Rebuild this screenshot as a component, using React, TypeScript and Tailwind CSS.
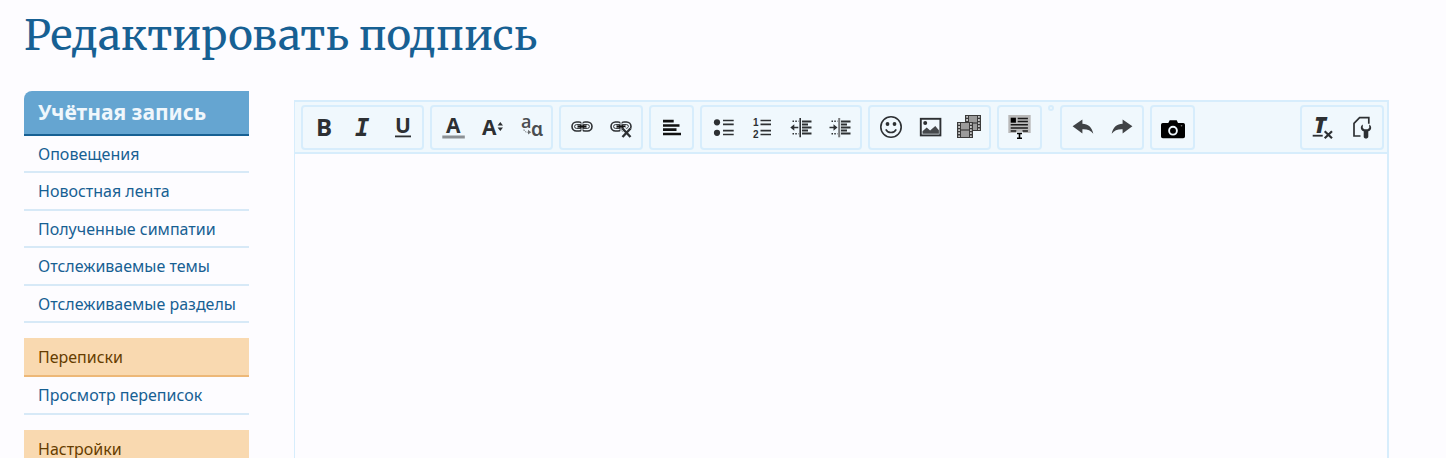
import React from "react";

interface IconProps {
  children: React.ReactNode;
}

interface ToolButtonProps {
  label: string;
  children: React.ReactNode;
}

interface MenuItemProps {
  label: string;
}

const Icon: React.FC<IconProps> = ({ children }) => (
  <svg
    width="25"
    height="25"
    viewBox="0 0 25 25"
    aria-hidden="true"
    className="overflow-visible font-['Open_Sans','Noto_Sans',sans-serif]"
    fill="#2d3033"
  >
    {children}
  </svg>
);

const ToolButton: React.FC<ToolButtonProps> = ({ label, children }) => (
  <button
    type="button"
    title={label}
    aria-label={label}
    className="flex items-center justify-center w-[39px] h-[39px] rounded hover:bg-white"
  >
    <Icon>{children}</Icon>
  </button>
);

const ToolGroup: React.FC<IconProps> = ({ children }) => (
  <div className="flex p-px border-2 border-[#d7edfc] rounded">{children}</div>
);

const MenuItem: React.FC<MenuItemProps> = ({ label }) => (
  <li className="flex items-center h-[37px] even:h-[38px] only:h-[38px] pl-[14px] border-b-2 border-[#d7e9f7]">
    <a href="#" className="text-[#176093] hover:underline">
      {label}
    </a>
  </li>
);

const MenuHeading: React.FC<MenuItemProps> = ({ label }) => (
  <h3 className="flex items-center h-[39px] mt-[15px] pl-[14px] bg-[#f9d9b0] border-b-2 border-[#edb878]">
    <a href="#" className="text-[#663d00]">
      {label}
    </a>
  </h3>
);

const ChainLink = () => (
  <g fill="none" stroke="#2d3033">
    <rect x="3" y="7" width="11.5" height="9" rx="4.5" strokeWidth="1.6" />
    <rect x="11.5" y="7" width="11.5" height="9" rx="4.5" strokeWidth="1.6" />
    <path
      d="M11 9.6H7.5a1.9 1.9 0 0 0 0 3.8H11M15 9.6h3.5a1.9 1.9 0 0 1 0 3.8H15"
      strokeWidth="1"
    />
    <path d="M13 6v3.5M13 13.5V17" stroke="#f0f8fd" strokeWidth="1.2" />
    <path d="M8.5 11.5h9" stroke="#111" strokeWidth="2.2" />
  </g>
);

const IndentLines = () => (
  <g fill="none" stroke="#2d3033">
    <path
      d="M14 6.5h9.5M14 9.5h6M14 12.5h9.5M14 15.5h6M14 18.5h9.5"
      strokeWidth="1.8"
    />
    <path d="M4.5 6.3h6M4.5 18.7h6" strokeWidth="1.4" strokeDasharray="1.5 1.3" />
  </g>
);

const FilmFrame = () => (
  <g>
    <rect x="0" y="0" width="16" height="16" fill="#3b3b3b" />
    <rect x="4" y="1" width="8" height="6.4" fill="#9b9b9b" />
    <rect x="4" y="8.6" width="8" height="6.4" fill="#9b9b9b" />
    <path
      d="M2.1 1v14M13.9 1v14"
      stroke="#c9c9c9"
      strokeWidth="1.8"
      strokeDasharray="1.8 1.3"
    />
  </g>
);

const BackArrow = () => (
  <path d="M2.6 11.3 12.4 4.6v4.1c5.6.1 9.7 3.4 10.9 10.1-2.6-3.6-6-4.8-10.9-4.6v4.2z" />
);

const App: React.FC = () => {
  const accountItems = [
    "Оповещения",
    "Новостная лента",
    "Полученные симпатии",
    "Отслеживаемые темы",
    "Отслеживаемые разделы",
  ];

  return (
    <div className="min-h-screen px-6 pt-2 bg-[#fdfcff] font-['Trebuchet_MS','Noto_Sans',sans-serif]">
      <h1 className="h-[83px] text-[42px] leading-[54px] text-[#176093] font-['Merriweather','DejaVu_Serif_Condensed','DejaVu_Serif',serif]">
        Редактировать подпись
      </h1>

      <div className="flex items-start gap-[45px]">
        <nav className="w-[225px] shrink-0 text-base leading-6">
          <h2 className="h-[45px] pl-[14px] rounded-tl-lg bg-[#65a5d1] border-b-2 border-[#176093] text-[#f0f7fc] text-[21px] leading-[43px] font-bold">
            Учётная запись
          </h2>
          <ul>
            {accountItems.map((item) => (
              <MenuItem key={item} label={item} />
            ))}
          </ul>
          <MenuHeading label="Переписки" />
          <ul>
            <MenuItem label="Просмотр переписок" />
          </ul>
          <MenuHeading label="Настройки" />
        </nav>

        <div className="flex flex-col grow min-w-0 mt-[9px] mr-[33px] border-2 border-l border-[#d7edfc]">
          <div
            role="toolbar"
            className="flex items-start gap-[6px] pt-[3px] pb-[2px] pl-[6px] pr-[3px] bg-[#f0f8fd] border-b-2 border-[#d7edfc]"
          >
            <ToolGroup>
              <ToolButton label="Жирный">
                <text x="5" y="21" fontSize="24" fontWeight="700">B</text>
              </ToolButton>
              <ToolButton label="Курсив">
                <text
                  x="5"
                  y="21"
                  fontSize="24"
                  fontWeight="700"
                  fontStyle="italic"
                  fontFamily="DejaVu Sans Mono"
                >
                  I
                </text>
              </ToolButton>
              <ToolButton label="Подчёркнутый">
                <text x="6" y="18" fontSize="21" fontWeight="700">U</text>
                <rect x="6" y="20.5" width="16" height="1.8" />
              </ToolButton>
            </ToolGroup>

            <ToolGroup>
              <ToolButton label="Цвет текста">
                <text x="6" y="18" fontSize="21" fontWeight="700">A</text>
                <rect x="2.3" y="20.5" width="22.5" height="3" fill="#8b9094" />
              </ToolButton>
              <ToolButton label="Размер шрифта">
                <text x="3" y="20" fontSize="21" fontWeight="700">A</text>
                <path d="m21.3 7 2.7 3.6h-5.4zM21.3 16l-2.7-3.6H24z" />
              </ToolButton>
              <ToolButton label="Шрифт">
                <g fill="#4a4d50">
                  <text x="3" y="13" fontSize="18" fontWeight="600">a</text>
                  <text x="13" y="21" fontSize="19" fontWeight="600">ɑ</text>
                </g>
                <path d="M6 14.5c0 2 1.5 2.8 5 2.8" fill="none" stroke="#6b6e70" strokeDasharray="1.5 1" />
                <path d="m10 14.8 3.2 2.4-3.2 2.4z" fill="#6b6e70" />
              </ToolButton>
            </ToolGroup>

            <ToolGroup>
              <ToolButton label="Ссылка">
                <ChainLink />
              </ToolButton>
              <ToolButton label="Убрать ссылку">
                <ChainLink />
                <path d="m15 13.5 7.5 8.5M22.5 13.5 15 22" stroke="#f0f8fd" strokeWidth="4.5" />
                <path d="m14.5 13.5 8 8.5M22.5 13.5l-8 8.5" stroke="#2d3033" strokeWidth="2.4" />
              </ToolButton>
            </ToolGroup>

            <ToolGroup>
              <ToolButton label="Выравнивание">
                <path
                  d="M4 6.2h10.7M4 10.5h16.5M4 14.7h13.5M4 19h18"
                  stroke="#111"
                  strokeWidth="2.7"
                />
              </ToolButton>
            </ToolGroup>

            <ToolGroup>
              <ToolButton label="Маркированный список">
                <circle cx="7" cy="7.3" r="3.1" />
                <circle cx="7" cy="17.8" r="3.1" />
                <path d="M13 5.5h10.7M13 9.3h10.7M13 15.7h10.7M13 19.5h10.7" stroke="#2d3033" strokeWidth="1.7" />
              </ToolButton>
              <ToolButton label="Нумерованный список">
                <g fontFamily="Liberation Sans" fontSize="10" fontWeight="700">
                  <text x="4" y="11">1</text>
                  <text x="4" y="23">2</text>
                </g>
                <path d="M11.5 5.5H22M11.5 9.3H22M11.5 15.7H22M11.5 19.5H22" stroke="#2d3033" strokeWidth="1.7" />
              </ToolButton>
              <ToolButton label="Уменьшить отступ">
                <IndentLines />
                <path d="M12.2 3v19.3" stroke="#2d3033" strokeWidth="1.6" />
                <path d="m2.3 12.5 4-3.2v2.4h4v1.6h-4v2.4z" />
              </ToolButton>
              <ToolButton label="Увеличить отступ">
                <IndentLines />
                <path d="M12.2 3v19.3" stroke="#77797b" strokeWidth="2" />
                <path d="m10.5 12.5-4-3.2v2.4h-4v1.6h4v2.4z" />
              </ToolButton>
            </ToolGroup>

            <ToolGroup>
              <ToolButton label="Смайлы">
                <circle cx="13" cy="12" r="10.2" fill="none" stroke="#2d3033" strokeWidth="1.6" />
                <circle cx="9.5" cy="9" r="1.9" />
                <circle cx="16.5" cy="9" r="1.9" />
                <path d="M7.8 14.3c2 4.3 8.4 4.3 10.4 0" fill="none" stroke="#2d3033" strokeWidth="1.6" />
              </ToolButton>
              <ToolButton label="Изображение">
                <rect x="3.8" y="3.8" width="19.6" height="16.6" fill="none" stroke="#2d3033" strokeWidth="1.9" />
                <circle cx="8.2" cy="8" r="2" />
                <path d="M5.5 18.8v-2.6l4.2-3.7 3.4 3 5.2-4.6 3.6 4.3v3.6z" fill="#45484b" />
              </ToolButton>
              <ToolButton label="Видео">
                <g transform="translate(9 0)">
                  <FilmFrame />
                </g>
                <g transform="translate(1 7)">
                  <FilmFrame />
                </g>
              </ToolButton>
            </ToolGroup>

            <ToolGroup>
              <ToolButton label="Вставить">
                <rect x="1.3" y="0" width="22.4" height="18" fill="#b9b9b9" />
                <rect x="3.7" y="2.7" width="5.2" height="5" fill="#000" />
                <path
                  d="M10.7 3.5h10.2M10.7 6.6h10.2M3.7 9.8h17.2M3.7 12.9h17.2M3.7 16h5.6M15.5 16h5.4"
                  stroke="#1a1a1a"
                  strokeWidth="1.5"
                />
                <path d="M9.3 16.8h6.6v8H9.3z" fill="#f0f8fd" />
                <path d="M10 18.5h5M10 23.3h5M12.5 18.5v5" stroke="#000" strokeWidth="1.6" />
              </ToolButton>
            </ToolGroup>

            <ToolGroup>{null}</ToolGroup>

            <ToolGroup>
              <ToolButton label="Отменить">
                <g fill="#404346">
                  <BackArrow />
                </g>
              </ToolButton>
              <ToolButton label="Вернуть">
                <g fill="#404346" transform="matrix(-1 0 0 1 26 0)">
                  <BackArrow />
                </g>
              </ToolButton>
            </ToolGroup>

            <ToolGroup>
              <ToolButton label="Загрузить фото">
                <path
                  d="M8.3 8 9.7 5.2h7L18 8h5.2A1.8 1.8 0 0 1 25 9.8v11.7a1.8 1.8 0 0 1-1.8 1.8H2.8A1.8 1.8 0 0 1 1 21.5V9.8A1.8 1.8 0 0 1 2.8 8z"
                  fill="#000"
                />
                <circle cx="13" cy="15.7" r="3.9" fill="none" stroke="#f0f8fd" strokeWidth="1.9" />
                <circle cx="21.5" cy="10.8" r="0.8" fill="#777" />
              </ToolButton>
            </ToolGroup>

            <div className="ml-auto">
              <ToolGroup>
                <ToolButton label="Удалить форматирование">
                  <text x="4" y="18" fontSize="22" fontWeight="800" fontStyle="italic">T</text>
                  <rect x="2.7" y="19.8" width="10" height="1.8" />
                  <path d="m14.7 16.2 7.3 7M22 16.2l-7.3 7" stroke="#2d3033" strokeWidth="2.2" />
                </ToolButton>
                <ToolButton label="Режим редактора">
                  <path
                    d="M11.5 21H5V8.3l5.6-5.6h9.2v6"
                    fill="none"
                    stroke="#2d3033"
                    strokeWidth="1.7"
                  />
                  <path d="M13.8 9.5c-1.6 1-2.2 2.4-1.9 3.9.3 1.4 1.4 2.4 2.8 2.8v5.5c0 2.4 4.6 2.4 4.6 0v-5.5c1.4-.4 2.5-1.4 2.8-2.8.3-1.5-.3-2.9-1.9-3.9v3.6l-1.6 1.2h-3.2l-1.6-1.2z" />
                </ToolButton>
              </ToolGroup>
            </div>
          </div>
          <textarea
            aria-label="Подпись"
            className="block w-full h-80 p-3 resize-none outline-none bg-[#fdfcff]"
          />
        </div>
      </div>
    </div>
  );
};

export default App;
